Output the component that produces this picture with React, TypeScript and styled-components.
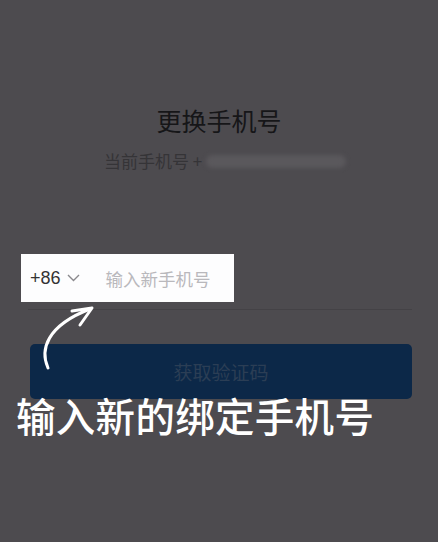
import React from 'react';
import styled, { createGlobalStyle } from 'styled-components';

const GlobalStyle = createGlobalStyle`
  html, body {
    margin: 0;
    padding: 0;
    background: #4d4b4f;
  }
  body {
    font-family: "Noto Sans CJK SC", "Noto Sans", sans-serif;
  }
`;

const Screen = styled.div`
  position: relative;
  width: 438px;
  height: 542px;
  overflow: hidden;
  background: #4d4b4f;
  display: flex;
  flex-direction: column;
`;

const Title = styled.h1`
  margin: 103px 0 0;
  text-align: center;
  font-size: 25px;
  line-height: 34px;
  font-weight: 400;
  color: #161618;
`;

const CurrentRow = styled.div`
  margin: 12px 0 0 104px;
  display: flex;
  align-items: center;
  gap: 4px;
  font-size: 17px;
  line-height: 24px;
  color: #353437;
`;

const MaskedNumber = styled.span`
  display: inline-block;
  width: 140px;
  height: 13px;
  border-radius: 7px;
  background: #5a585c;
  filter: blur(2px);
`;

const PhoneField = styled.div`
  margin: 81px 0 0 21px;
  width: 213px;
  height: 48px;
  box-sizing: border-box;
  background: #fdfdfe;
  display: flex;
  align-items: center;
  padding-left: 9px;
`;

const AreaCode = styled.span`
  display: flex;
  align-items: center;
  gap: 6px;
  font-family: "Liberation Sans", Arial, sans-serif;
  font-size: 18px;
  color: #333;
`;

const Placeholder = styled.span`
  margin-left: 26px;
  font-size: 17.5px;
  color: #b9b8bc;
`;

const Divider = styled.div`
  margin: 7px 26px 0 28px;
  height: 1px;
  background: #444246;
`;

const CodeButton = styled.button`
  margin: 34px 26px 0 30px;
  height: 55px;
  border: none;
  border-radius: 5px;
  background: #0c2848;
  color: #2b3e55;
  font-family: "Noto Sans CJK SC", sans-serif;
  font-size: 19px;
  cursor: pointer;
`;

const Caption = styled.div`
  margin: -8px 0 0 16px;
  font-size: 39.5px;
  line-height: 48px;
  font-weight: 500;
  color: #ffffff;
  letter-spacing: 0.3px;
`;

const Arrow = styled.svg`
  position: absolute;
  left: 36px;
  top: 300px;
  width: 70px;
  height: 80px;
  overflow: visible;
`;

const Chevron = () => (
  <svg width="13" height="8" viewBox="0 0 13 8">
    <path d="M1 1l5.5 5.5L12 1" fill="none" stroke="#8a898d" strokeWidth="1.4" />
  </svg>
);

export default function App() {
  return (
    <>
      <GlobalStyle />
      <Screen>
        <Title>更换手机号</Title>
        <CurrentRow>
          当前手机号 +<MaskedNumber />
        </CurrentRow>
        <PhoneField>
          <AreaCode>
            +86 <Chevron />
          </AreaCode>
          <Placeholder>输入新手机号</Placeholder>
        </PhoneField>
        <Divider />
        <CodeButton>获取验证码</CodeButton>
        <Caption>输入新的绑定手机号</Caption>
        <Arrow viewBox="36 300 70 80">
          <path
            d="M48 368 C40 350 46 326 90 309"
            fill="none"
            stroke="#fff"
            strokeWidth="3"
            strokeLinecap="round"
          />
          <path
            d="M72 311 L92 308 L80 325"
            fill="none"
            stroke="#fff"
            strokeWidth="3"
            strokeLinecap="round"
            strokeLinejoin="round"
          />
        </Arrow>
      </Screen>
    </>
  );
}
